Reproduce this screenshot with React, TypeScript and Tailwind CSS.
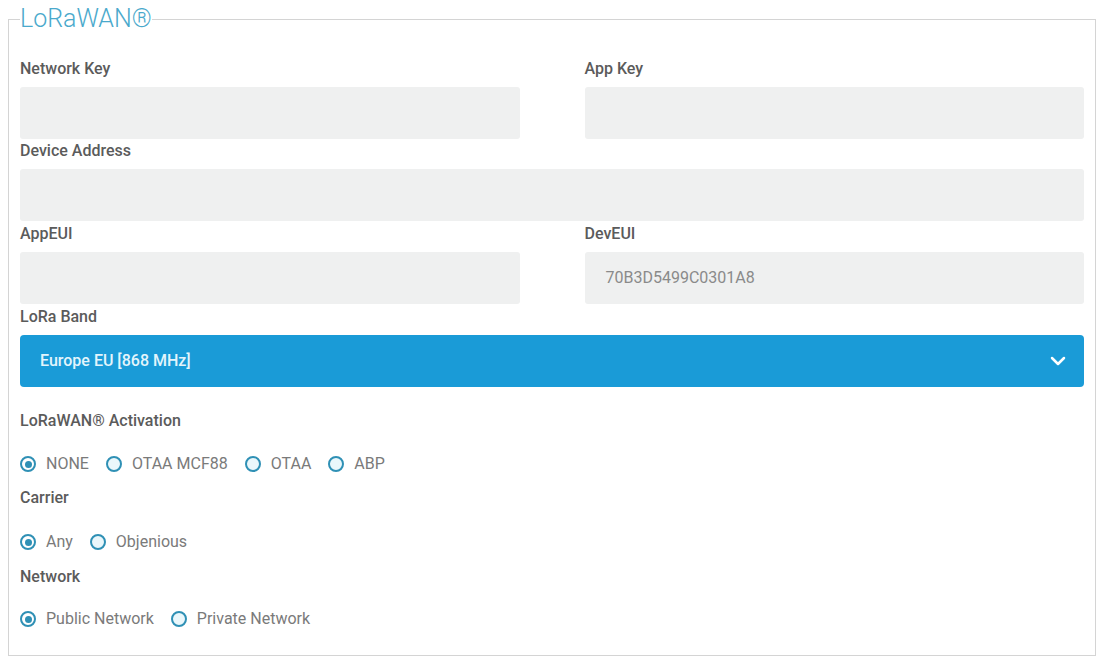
import React, { useState } from "react";
import { ChevronDown } from "lucide-react";

const font = { fontFamily: "Roboto, 'Noto Sans', sans-serif" };

const Label = ({ children }: { children: React.ReactNode }) => (
  <div className="h-5 text-[16px] leading-5 font-medium text-[#5b5b5b]">{children}</div>
);

const Field = ({ label, value }: { label: string; value?: string }) => (
  <div className="flex flex-col">
    <Label>{label}</Label>
    <div className="mt-2 h-[52px] rounded-[3px] bg-[#eff0f0] px-[21px] flex items-center text-[16px] text-[#8a8a8a]">
      {value}
    </div>
  </div>
);

const Radio = ({
  label,
  checked,
  onClick,
}: {
  label: string;
  checked: boolean;
  onClick: () => void;
}) => (
  <button type="button" onClick={onClick} className="flex items-center gap-[10px] h-5">
    <span
      className={`w-[16px] h-[16px] rounded-full border-[2.5px] border-[#2f90b5] flex items-center justify-center ${
        checked ? "bg-white" : "bg-[#eaf7fb]"
      }`}
    >
      {checked && <span className="w-[7px] h-[7px] rounded-full bg-[#2f90b5]" />}
    </span>
    <span className="text-[16px] text-[#7a7a7a]">{label}</span>
  </button>
);

const RadioGroup = ({ options }: { options: string[] }) => {
  const [value, setValue] = useState(options[0]);
  return (
    <div className="flex items-center gap-[17px]">
      {options.map((o) => (
        <Radio key={o} label={o} checked={value === o} onClick={() => setValue(o)} />
      ))}
    </div>
  );
};

export default function App() {
  return (
    <div className="bg-white min-h-[662px] pt-[5px]" style={font}>
      <fieldset className="ml-2 w-[1088px] h-[651px] border border-[#d4d4d4] px-[11px]">
        <legend className="text-[25px] leading-[28px] font-light text-[#4aa9cc] px-0">
          LoRaWAN®
        </legend>

        <div className="pt-[26px] flex flex-col">
          <div className="grid grid-cols-2 gap-x-[65px]">
            <Field label="Network Key" />
            <Field label="App Key" />
          </div>

          <div className="mt-[2px]">
            <Field label="Device Address" />
          </div>

          <div className="mt-[3px] grid grid-cols-2 gap-x-[65px]">
            <Field label="AppEUI" />
            <Field label="DevEUI" value="70B3D5499C0301A8" />
          </div>

          <div className="mt-[3px] flex flex-col">
            <Label>LoRa Band</Label>
            <div className="mt-2 h-[52px] rounded-[4px] bg-[#1a9bd7] pl-5 pr-[14px] flex items-center justify-between">
              <span className="text-[16px] font-medium text-[#e3f5fc]">Europe EU [868 MHz]</span>
              <ChevronDown className="w-6 h-6 text-white" strokeWidth={2.5} />
            </div>
          </div>

          <div className="mt-6">
            <Label>LoRaWAN® Activation</Label>
          </div>
          <div className="mt-[23px]">
            <RadioGroup options={["NONE", "OTAA MCF88", "OTAA", "ABP"]} />
          </div>

          <div className="mt-[14px]">
            <Label>Carrier</Label>
          </div>
          <div className="mt-6">
            <RadioGroup options={["Any", "Objenious"]} />
          </div>

          <div className="mt-[15px]">
            <Label>Network</Label>
          </div>
          <div className="mt-[22px]">
            <RadioGroup options={["Public Network", "Private Network"]} />
          </div>
        </div>
      </fieldset>
    </div>
  );
}
